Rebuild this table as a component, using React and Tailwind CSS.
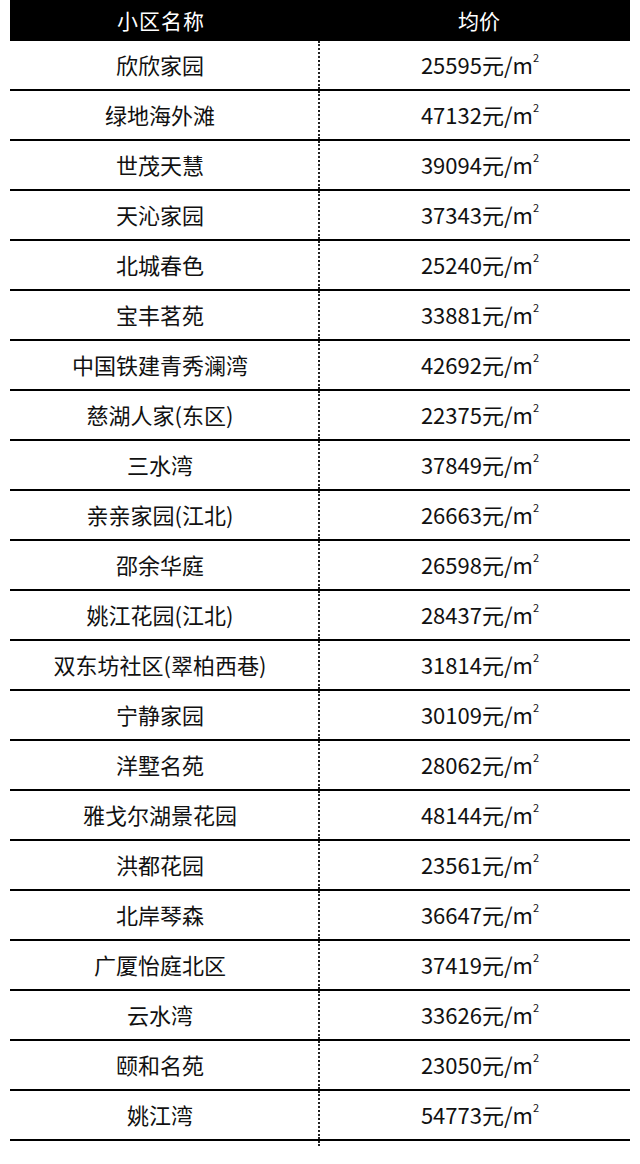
const ROWS = [
  ["欣欣家园", "25595"],
  ["绿地海外滩", "47132"],
  ["世茂天慧", "39094"],
  ["天沁家园", "37343"],
  ["北城春色", "25240"],
  ["宝丰茗苑", "33881"],
  ["中国铁建青秀澜湾", "42692"],
  ["慈湖人家(东区)", "22375"],
  ["三水湾", "37849"],
  ["亲亲家园(江北)", "26663"],
  ["邵余华庭", "26598"],
  ["姚江花园(江北)", "28437"],
  ["双东坊社区(翠柏西巷)", "31814"],
  ["宁静家园", "30109"],
  ["洋墅名苑", "28062"],
  ["雅戈尔湖景花园", "48144"],
  ["洪都花园", "23561"],
  ["北岸琴森", "36647"],
  ["广厦怡庭北区", "37419"],
  ["云水湾", "33626"],
  ["颐和名苑", "23050"],
  ["姚江湾", "54773"]
];

export default function App() {
  return (
    <div
      className="w-[640px] h-[1164px] bg-white px-[10px] text-[#111]"
      style={{ fontFamily: '"Noto Sans CJK SC", "Noto Sans", sans-serif' }}
    >
      <div className="grid grid-cols-[310px_1fr] h-[41px] bg-black text-white text-[21px] items-center">
        <div className="text-center tracking-[1px] pr-[8px]">小区名称</div>
        <div className="text-center pl-[8px]">均价</div>
      </div>
      {ROWS.map(([name, price]) => (
        <div key={name} className="grid grid-cols-[310px_1fr] h-[50px] border-b-2 border-black text-[22px]">
          <div className="flex items-center justify-center border-r-2 border-dotted border-[#222] pb-[2px] pr-[8px]">{name}</div>
          <div className="flex items-center justify-center pb-[2px] pl-[10px]">
            <span className="leading-none">
              {price}元/m<span className="inline-block align-top text-[11px] leading-none -mt-[1px]">2</span>
            </span>
          </div>
        </div>
      ))}
      <div className="h-[3px] w-[310px] border-r-2 border-dotted border-[#222]" />
    </div>
  );
}
